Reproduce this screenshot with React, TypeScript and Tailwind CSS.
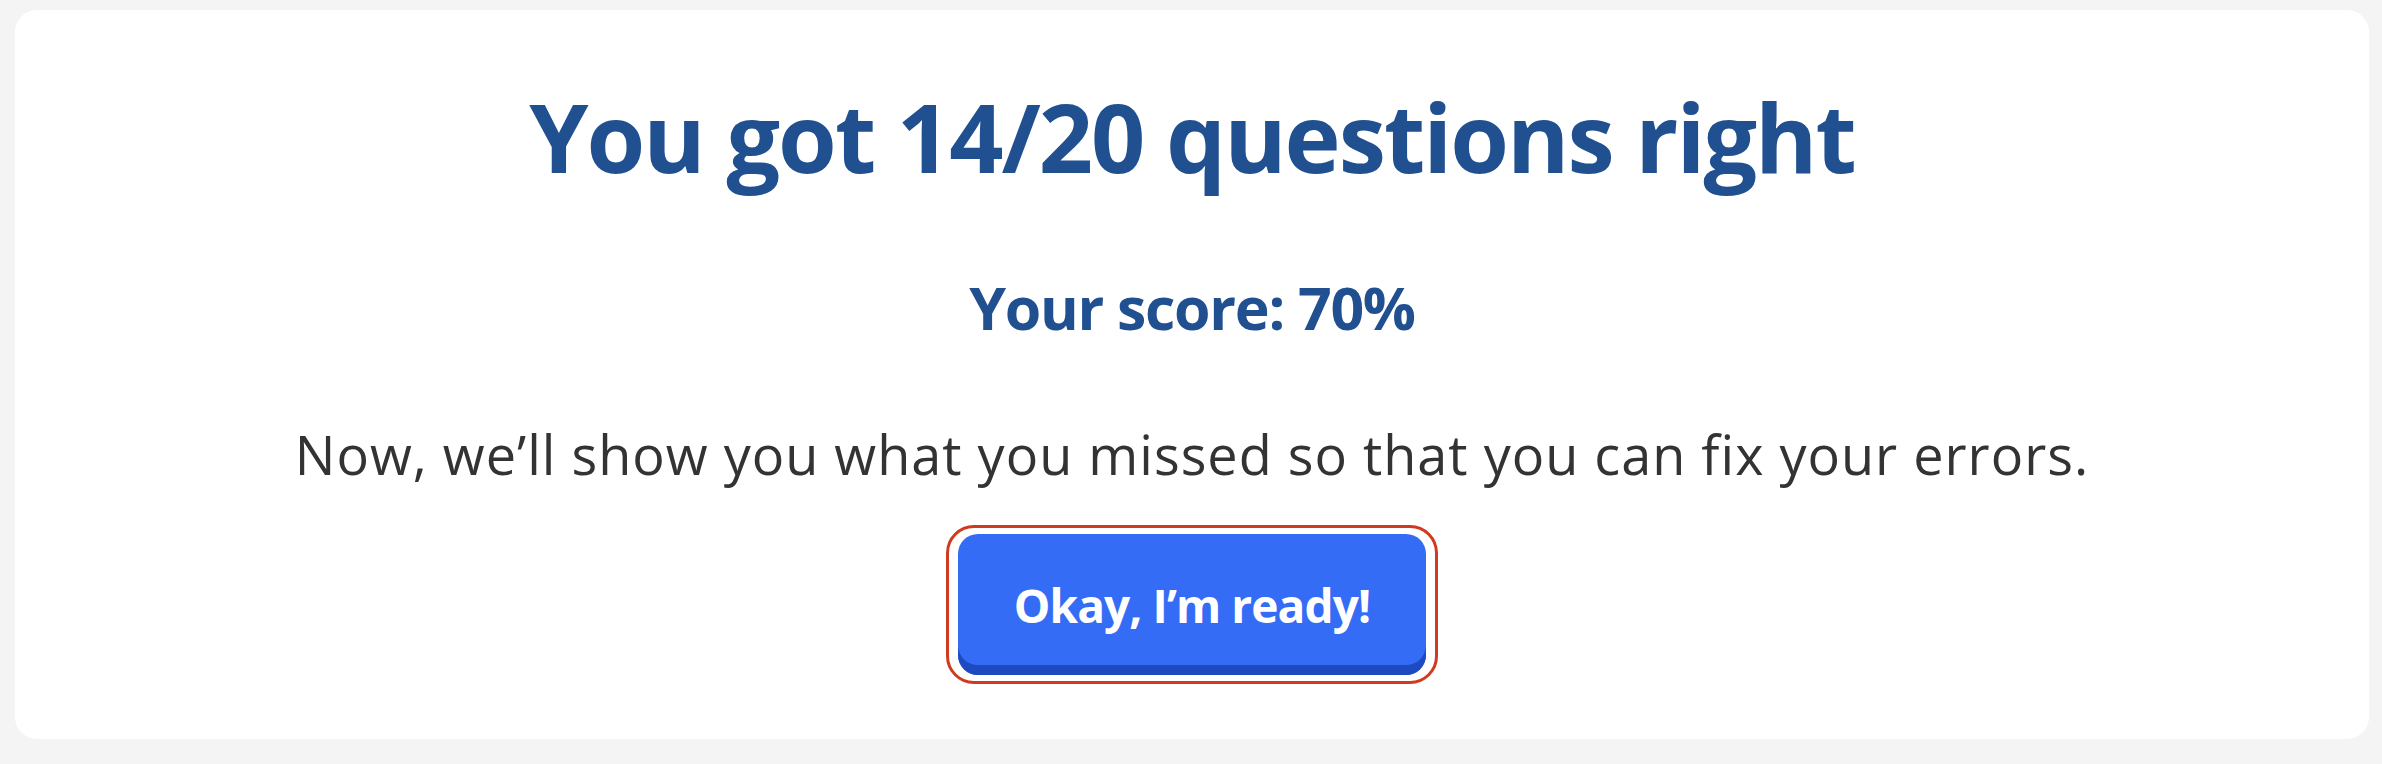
import React from 'react';

const ScoreCard: React.FC = () => {
  return (
    <div className="flex h-[729px] flex-col items-center rounded-[22px] bg-white pt-[79px]">
      <h1 className="text-[95px] font-bold leading-none tracking-[-2px] text-[#215091]">You got 14/20 questions right</h1>
      <p className="mt-[94px] text-[59px] font-bold leading-none tracking-[-1.3px] text-[#215091]">Your score: 70%</p>
      <p className="mt-[90px] text-[54px] leading-none tracking-[1px] text-[#333333]">
        Now, we’ll show you what you missed so that you can fix your errors.
      </p>
      {/* focus ring drawn as a wrapper: wider gap at the sides than top/bottom */}
      <div className="mt-[44px] rounded-[28px] border-[3px] border-[#d03a1e] px-[9px] py-[6px]">
        <button className="flex h-[141px] w-[468px] items-center justify-center rounded-[20px] bg-[#356cf5] text-[46px] font-bold leading-none tracking-[-0.9px] text-white shadow-[inset_0_-10px_0_#1e49c1]">
          Okay, I’m ready!
        </button>
      </div>
    </div>
  );
};

export default function App() {
  return (
    <div className="h-[764px] w-[2382px] bg-[#f4f4f4] pt-[10px] pl-[15px] pr-[13px] font-['Open_Sans',sans-serif]">
      <ScoreCard />
    </div>
  );
}
